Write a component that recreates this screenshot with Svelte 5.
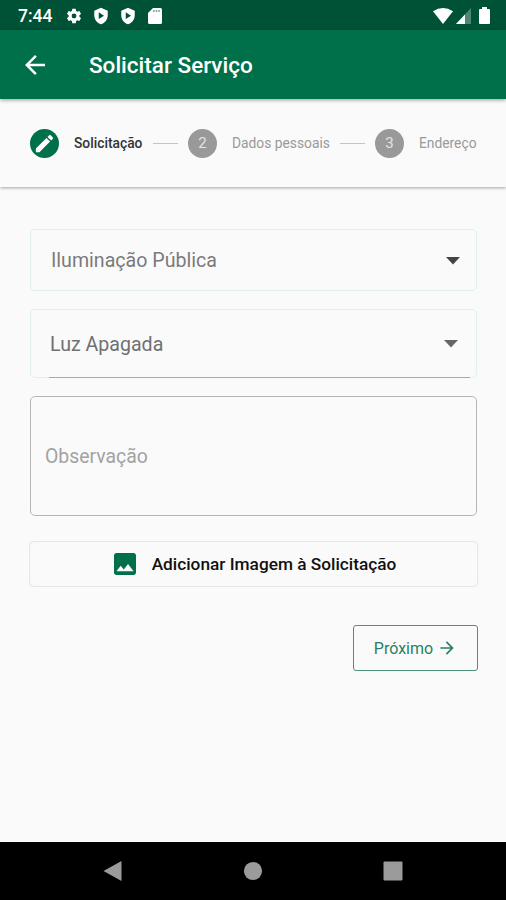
<script lang="ts">
	type Step = { label: string; width: number };

	const steps: Step[] = [
		{ label: 'Solicitação', width: 69 },
		{ label: 'Dados pessoais', width: 98 },
		{ label: 'Endereço', width: 58 }
	];
	let current = $state(0);
	let note = $state('');

	const shield = 'M12 1 3 5v6c0 5.55 3.84 10.74 9 12 5.16-1.26 9-6.45 9-12V5l-9-4Zm-3 6 7 4.5-7 4.5Z';
</script>

<div class="screen">
	<div class="status">
		<span class="time">7:44</span>
		<svg class="gear" viewBox="0 0 24 24" width="18" height="18">
			<path
				d="M19.14 12.94c.04-.3.06-.61.06-.94 0-.32-.02-.64-.07-.94l2.03-1.58c.18-.14.23-.41.12-.61l-1.92-3.32c-.12-.22-.37-.29-.59-.22l-2.39.96c-.5-.38-1.03-.7-1.62-.94l-.36-2.54c-.04-.24-.24-.41-.48-.41h-3.84c-.24 0-.43.17-.47.41l-.36 2.54c-.59.24-1.13.57-1.62.94l-2.39-.96c-.22-.08-.47 0-.59.22L2.74 8.87c-.12.21-.08.47.12.61l2.03 1.58c-.05.3-.09.63-.09.94s.02.64.07.94l-2.03 1.58c-.18.14-.23.41-.12.61l1.92 3.32c.12.22.37.29.59.22l2.39-.96c.5.38 1.03.7 1.62.94l.36 2.54c.05.24.24.41.48.41h3.84c.24 0 .44-.17.47-.41l.36-2.54c.59-.24 1.13-.56 1.62-.94l2.39.96c.22.08.47 0 .59-.22l1.92-3.32c.12-.22.07-.47-.12-.61l-2.01-1.58zM12 15.2a3.2 3.2 0 1 1 0-6.4 3.2 3.2 0 0 1 0 6.4z"
			/>
		</svg>
		<svg class="shield" viewBox="0 0 24 24" width="18" height="18"><path d={shield} /></svg>
		<svg class="shield" viewBox="0 0 24 24" width="18" height="18"><path d={shield} /></svg>
		<svg class="card" viewBox="0 0 14 16" width="14" height="16">
			<path d="M5 0h7.5Q14 0 14 1.500v13q0 1.500-1.500 1.500h-11Q0 16 0 14.500V5Z" />
			<path class="pins" d="M5 2h1.500v2H5zM7.700 2h1.500v2H7.700zM10.300 2h1.500v2h-1.500z" />
		</svg>
		<span class="spacer"></span>
		<svg class="wifi" viewBox="0 0 20 16" width="20" height="16">
			<path d="M0 3.200Q10-3 20 3.200L10 16Z" />
		</svg>
		<svg class="signal" viewBox="0 0 15 16" width="15" height="16">
			<path opacity="0.3" d="M15 0v16H0Z" />
			<path d="M9 6.400V16H0Z" />
		</svg>
		<svg class="battery" viewBox="0 0 11 17" width="11" height="17">
			<path d="M3 0h5v2h2q1 0 1 1v13q0 1-1 1H1q-1 0-1-1V3q0-1 1-1h2Z" />
		</svg>
	</div>

	<header>
		<button class="back" aria-label="Voltar">
			<svg viewBox="0 0 24 24" width="30" height="30">
				<path d="M20 11H7.830l5.590-5.590L12 4l-8 8 8 8 1.410-1.410L7.830 13H20v-2z" />
			</svg>
		</button>
		<h1>Solicitar Serviço</h1>
	</header>

	<nav class="stepper">
		{#each steps as step, i}
			{#if i > 0}
				<span class="line"></span>
			{/if}
			<button class="step" class:active={i === current} onclick={() => (current = i)}>
				<span class="bullet">
					{#if i === current}
						<svg viewBox="0 0 24 24" width="23" height="23">
							<path
								d="M3 17.250V21h3.750L17.810 9.940l-3.750-3.750L3 17.250zM20.710 7.040a1 1 0 0 0 0-1.410l-2.340-2.340a1 1 0 0 0-1.410 0l-1.830 1.830 3.750 3.750 1.830-1.830z"
							/>
						</svg>
					{:else}
						{i + 1}
					{/if}
				</span>
				<span class="label" style:width="{step.width}px">{step.label}</span>
			</button>
		{/each}
	</nav>

	<main>
		<button class="select">
			<span>Iluminação Pública</span>
			<svg viewBox="0 0 14 8" width="14" height="8"><path d="M0 0h14L7 7.500Z" /></svg>
		</button>
		<button class="select second">
			<span>Luz Apagada</span>
			<svg viewBox="0 0 14 8" width="14" height="8"><path d="M0 0h14L7 7.500Z" /></svg>
		</button>
		<input class="note" placeholder="Observação" bind:value={note} />
		<button class="image">
			<svg viewBox="3 3 18 18" width="22" height="22">
				<path
					d="M21 19V5c0-1.100-.900-2-2-2H5c-1.100 0-2 .900-2 2v14c0 1.100.900 2 2 2h14c1.100 0 2-.900 2-2zM8.500 13.500l2.500 3.010L14.500 12l4.500 6H5l3.500-4.500z"
				/>
			</svg>
			<span>Adicionar Imagem à Solicitação</span>
		</button>
		<button class="next">
			<span>Próximo</span>
			<svg viewBox="0 0 24 24" width="20" height="20">
				<path d="m12 4-1.410 1.410L16.170 11H4v2h12.170l-5.580 5.590L12 20l8-8-8-8z" />
			</svg>
		</button>
	</main>

	<footer>
		<svg viewBox="0 0 20 22" width="20" height="22"><path d="M18.500 1v20L.500 11Z" /></svg>
		<svg viewBox="0 0 20 20" width="20" height="20"><circle cx="10" cy="10" r="9.100" /></svg>
		<svg viewBox="0 0 20 20" width="20" height="20">
			<rect x="0.500" y="0.500" width="19" height="19" rx="1" />
		</svg>
	</footer>
</div>

<style>
	:global(body) {
		background: #fafafa;
	}
	.screen {
		display: flex;
		flex-direction: column;
		height: 900px;
		background: #fafafa;
		font-family: Roboto, 'Liberation Sans', sans-serif;
		overflow: hidden;
	}
	button {
		border: 0;
		margin: 0;
		padding: 0;
		background: none;
		font: inherit;
		color: inherit;
		text-align: left;
	}
	svg {
		flex: none;
		fill: currentColor;
	}

	.status {
		display: flex;
		align-items: center;
		box-sizing: border-box;
		height: 30px;
		padding: 1px 16px 0 18px;
		background: #005237;
		color: #fff;
	}
	.time {
		width: 47px;
		font-size: 17.5px;
		font-weight: 500;
	}
	.shield {
		margin-left: 9px;
	}
	.card {
		margin-left: 11px;
	}
	.pins {
		fill: #7fa898;
	}
	.spacer {
		flex: 1;
	}
	.signal {
		margin-left: 3px;
	}
	.battery {
		margin-left: 8px;
	}

	header {
		position: relative;
		z-index: 2;
		display: flex;
		align-items: center;
		height: 69px;
		padding-left: 20px;
		background: #00704a;
		color: #fff;
		box-shadow: 0 1px 4px rgba(0, 0, 0, 0.4);
	}
	.back {
		display: flex;
		width: 69px;
	}
	h1 {
		margin: 0;
		padding-top: 1px;
		font-size: 22.5px;
		font-weight: 500;
	}

	.stepper {
		position: relative;
		z-index: 1;
		display: flex;
		align-items: center;
		height: 88px;
		padding: 0 29px 0 30px;
		box-shadow: 0 1px 3px rgba(0, 0, 0, 0.35);
	}
	.step {
		display: flex;
		align-items: center;
		gap: 15px;
		color: #999;
		font-size: 13.8px;
	}
	.bullet {
		display: flex;
		align-items: center;
		justify-content: center;
		width: 29px;
		height: 29px;
		border-radius: 50%;
		background: #999;
		color: #e4e4e4;
		font-size: 15px;
	}
	.label {
		white-space: nowrap;
	}
	.active {
		color: #333;
		font-weight: 500;
	}
	.active .bullet {
		background: #00704a;
		color: #fff;
	}
	.line {
		width: 25px;
		height: 1px;
		margin: 0 10px;
		background: #c4c4c4;
	}

	main {
		flex: 1;
		display: flex;
		flex-direction: column;
		padding: 42px 29px 0 30px;
	}
	.select {
		display: flex;
		align-items: center;
		justify-content: space-between;
		box-sizing: border-box;
		height: 62px;
		padding: 1px 16px 0 20px;
		border: 1.5px solid #dff2ec;
		border-radius: 5px;
		color: #7a7a7a;
		font-size: 19.6px;
	}
	.select svg {
		color: #444;
	}
	.second {
		position: relative;
		height: 69px;
		margin-top: 18px;
		padding: 1px 18px 0 19px;
		color: #707070;
	}
	.second svg {
		color: #666;
	}
	.second::after {
		content: '';
		position: absolute;
		right: 6px;
		bottom: -1px;
		left: 18px;
		height: 1.5px;
		background: #98b0a9;
	}
	.note {
		box-sizing: border-box;
		height: 120px;
		margin-top: 18px;
		padding: 0 14px;
		border: 1.5px solid #b6b6b6;
		border-radius: 5px;
		background: none;
		font: 19.4px Roboto, 'Liberation Sans', sans-serif;
	}
	.note::placeholder {
		color: #a2a2a2;
		opacity: 1;
	}
	.image {
		display: flex;
		align-items: center;
		justify-content: center;
		gap: 16px;
		box-sizing: border-box;
		height: 46px;
		margin: 25px -1px 0;
		padding-left: 3px;
		border: 1.5px solid #e6e6e6;
		border-radius: 4px;
		color: #111;
		font-size: 17.25px;
		font-weight: 500;
	}
	.image svg {
		color: #00704a;
	}
	.next {
		align-self: flex-end;
		display: flex;
		align-items: center;
		justify-content: center;
		gap: 4px;
		box-sizing: border-box;
		width: 125px;
		height: 46px;
		margin: 38px -1px 0 0;
		border: 1px solid #4d9179;
		border-radius: 3px;
		color: #2a8062;
		font-size: 16px;
	}

	footer {
		display: flex;
		align-items: center;
		justify-content: center;
		gap: 120px;
		height: 58px;
		background: #000;
		color: #9b9b9b;
	}
</style>
